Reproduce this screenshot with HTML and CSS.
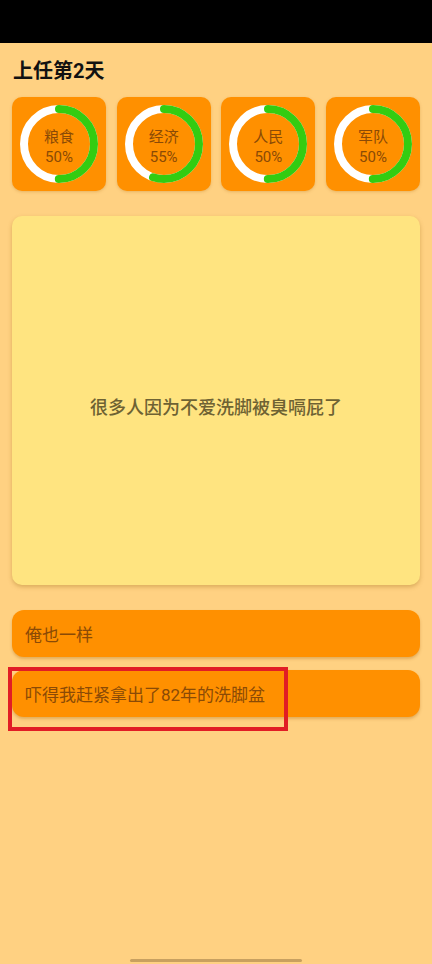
FILE: index.html
```html
<!DOCTYPE html>
<html lang="zh">
<head>
<meta charset="utf-8">
<link rel="stylesheet" href="styles.css">
</head>
<body>
<div class="status-bar"></div>
<main class="page">
  <h1 class="title">上任第2天</h1>
  <div class="stats">
    <div class="stat">
      <svg class="ring" viewBox="0 0 78 78"><circle cx="39" cy="39" r="35" class="ring-bg"/><circle cx="39" cy="39" r="35" class="ring-fg" stroke-dasharray="109.96 219.91"/></svg>
      <div class="stat-text"><span class="stat-name">粮食</span><span class="stat-val">50%</span></div>
    </div>
    <div class="stat">
      <svg class="ring" viewBox="0 0 78 78"><circle cx="39" cy="39" r="35" class="ring-bg"/><circle cx="39" cy="39" r="35" class="ring-fg" stroke-dasharray="120.95 219.91"/></svg>
      <div class="stat-text"><span class="stat-name">经济</span><span class="stat-val">55%</span></div>
    </div>
    <div class="stat">
      <svg class="ring" viewBox="0 0 78 78"><circle cx="39" cy="39" r="35" class="ring-bg"/><circle cx="39" cy="39" r="35" class="ring-fg" stroke-dasharray="109.96 219.91"/></svg>
      <div class="stat-text"><span class="stat-name">人民</span><span class="stat-val">50%</span></div>
    </div>
    <div class="stat">
      <svg class="ring" viewBox="0 0 78 78"><circle cx="39" cy="39" r="35" class="ring-bg"/><circle cx="39" cy="39" r="35" class="ring-fg" stroke-dasharray="109.96 219.91"/></svg>
      <div class="stat-text"><span class="stat-name">军队</span><span class="stat-val">50%</span></div>
    </div>
  </div>
  <div class="event-card"><span class="event-text">很多人因为不爱洗脚被臭嗝屁了</span></div>
  <div class="choices">
    <button class="choice">俺也一样</button>
    <div class="choice-wrap">
      <button class="choice">吓得我赶紧拿出了82年的洗脚盆</button>
      <div class="highlight"></div>
    </div>
  </div>
</main>
<div class="home-indicator"></div>
</body>
</html>
```
FILE: styles.css
```css
* { box-sizing: border-box; }
html, body {
  margin: 0;
  padding: 0;
  height: 100%;
}
body {
  background: #ffd182;
  font-family: Roboto, "Noto Sans CJK SC", sans-serif;
  width: 432px;
  height: 964px;
  position: relative;
  overflow: hidden;
}
.status-bar {
  height: 43px;
  background: #000;
}
.page {
  padding: 0 12px;
}
.title {
  margin: 0;
  padding: 14px 0 0 1px;
  height: 54px;
  font-size: 20px;
  font-weight: 700;
  line-height: 28px;
  color: #111;
}
.stats {
  display: grid;
  grid-template-columns: repeat(4, 94px);
  justify-content: space-between;
}
.stat {
  height: 94px;
  background: #ff9000;
  border-radius: 10px;
  box-shadow: 0 1px 3px rgba(160, 90, 0, 0.25);
  position: relative;
  display: flex;
  align-items: center;
  justify-content: center;
}
.ring {
  position: absolute;
  left: 8px;
  top: 8px;
  width: 78px;
  height: 78px;
}
.ring-bg {
  fill: none;
  stroke: #ffffff;
  stroke-width: 8;
}
.ring-fg {
  fill: none;
  stroke: #33cc11;
  stroke-width: 8;
  stroke-linecap: round;
  transform: rotate(-90deg);
  transform-origin: 39px 39px;
}
.stat-text {
  display: flex;
  flex-direction: column;
  align-items: center;
  color: #8a4a06;
  position: relative;
  padding-top: 5px;
}
.stat-name {
  font-size: 15px;
  line-height: 20px;
}
.stat-val {
  font-size: 15px;
  line-height: 20px;
}
.event-card {
  margin-top: 25px;
  height: 369px;
  background: #ffe480;
  border-radius: 10px;
  box-shadow: 0 2px 4px rgba(150, 100, 20, 0.35);
  display: flex;
  align-items: center;
  justify-content: center;
}
.event-text {
  padding-top: 10px;
  font-size: 18px;
  font-weight: 500;
  color: #6e6233;
}
.choices {
  margin-top: 25px;
  display: flex;
  flex-direction: column;
  gap: 13px;
}
.choice-wrap {
  position: relative;
}
.choice {
  display: block;
  width: 100%;
  height: 47px;
  border: none;
  border-radius: 12px;
  background: #ff9000;
  box-shadow: 0 2px 3px rgba(160, 90, 0, 0.3);
  text-align: left;
  padding: 0 13px;
  font-family: Roboto, "Noto Sans CJK SC", sans-serif;
  font-size: 17px;
  color: #8a4a06;
}
.highlight {
  position: absolute;
  left: -4px;
  top: -3px;
  width: 280px;
  height: 64px;
  border: 4px solid #e11d25;
}
.home-indicator {
  position: absolute;
  left: 130px;
  bottom: 2px;
  width: 172px;
  height: 3px;
  border-radius: 2px;
  background: #c8a060;
}
```
